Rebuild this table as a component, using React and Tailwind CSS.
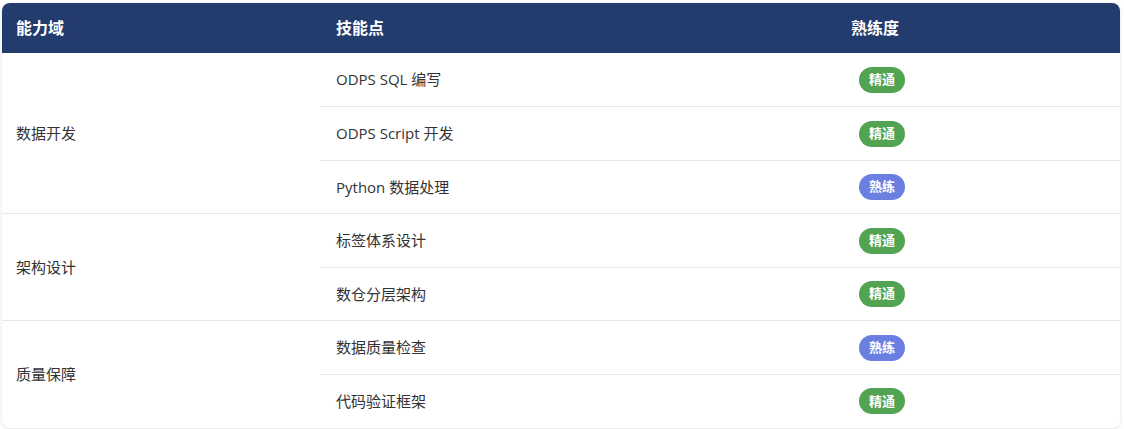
const groups = [
  {
    domain: '数据开发',
    skills: [
      { name: 'ODPS SQL 编写', level: '精通' },
      { name: 'ODPS Script 开发', level: '精通' },
      { name: 'Python 数据处理', level: '熟练' },
    ],
  },
  {
    domain: '架构设计',
    skills: [
      { name: '标签体系设计', level: '精通' },
      { name: '数仓分层架构', level: '精通' },
    ],
  },
  {
    domain: '质量保障',
    skills: [
      { name: '数据质量检查', level: '熟练' },
      { name: '代码验证框架', level: '精通' },
    ],
  },
];

const Badge = ({ level }) => (
  <span
    className={`inline-flex items-center justify-center h-[26px] px-[10px] rounded-[13px] text-[13px] font-bold text-white ${
      level === '精通' ? 'bg-[#52a352]' : 'bg-[#6b7fe0]'
    }`}
  >
    {level}
  </span>
);

export default function App() {
  return (
    <div className="min-h-screen bg-white pt-[3px] pl-[2px] font-['Open_Sans','Noto_Sans_CJK_SC',sans-serif]">
      <div className="w-[1118px] rounded-lg overflow-hidden bg-white shadow-[0_1px_4px_rgba(0,0,0,0.12)]">
        <table className="w-full border-collapse table-fixed">
          <colgroup>
            <col className="w-[318px]" />
            <col className="w-[320px]" />
            <col />
          </colgroup>
          <thead>
            <tr className="bg-[#243b6d] h-[50px]">
              <th className="text-left px-[14px] text-[16px] font-bold text-white">能力域</th>
              <th className="text-left px-4 text-[16px] font-bold text-white">技能点</th>
              <th className="text-center pr-[10px] text-[16px] font-bold text-white">熟练度</th>
            </tr>
          </thead>
          <tbody>
            {groups.map((g, gi) =>
              g.skills.map((s, si) => (
                <tr key={`${gi}-${si}`} className="h-[53.5px]">
                  {si === 0 && (
                    <td
                      rowSpan={g.skills.length}
                      className={`px-[14px] text-[15px] text-[#333] align-middle ${
                        gi < groups.length - 1 ? 'border-b border-[#e8e8e8]' : ''
                      }`}
                    >
                      {g.domain}
                    </td>
                  )}
                  <td
                    className={`px-4 text-[15px] text-[#333] ${
                      gi < groups.length - 1 || si < g.skills.length - 1 ? 'border-b border-[#e8e8e8]' : ''
                    }`}
                  >
                    {s.name}
                  </td>
                  <td
                    className={`text-center pl-[4px] ${
                      gi < groups.length - 1 || si < g.skills.length - 1 ? 'border-b border-[#e8e8e8]' : ''
                    }`}
                  >
                    <Badge level={s.level} />
                  </td>
                </tr>
              ))
            )}
          </tbody>
        </table>
      </div>
    </div>
  );
}
